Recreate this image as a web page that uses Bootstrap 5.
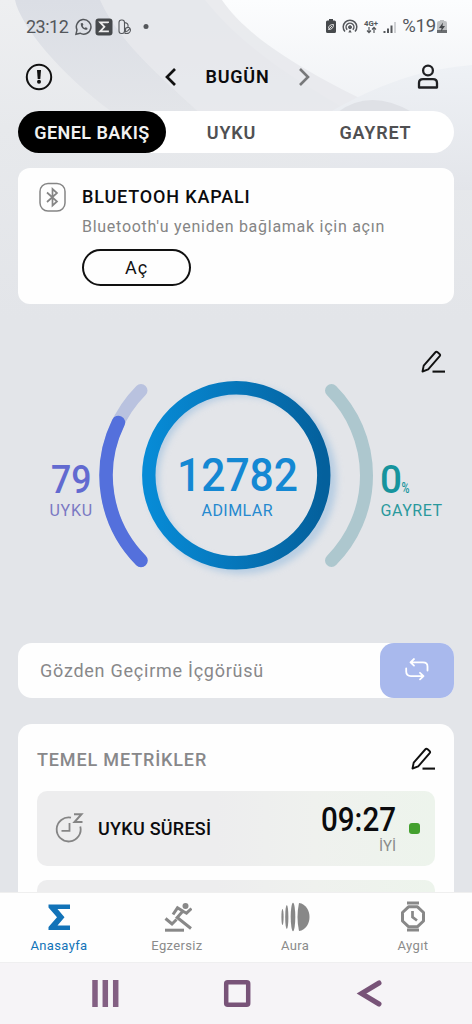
<!DOCTYPE html>
<html lang="tr">
<head>
<meta charset="utf-8">
<meta name="viewport" content="width=device-width, initial-scale=1">
<title>Bugün</title>
<link href="https://cdn.jsdelivr.net/npm/bootstrap@5.3.0/dist/css/bootstrap.min.css" rel="stylesheet">
<style>
  body { font-family: Roboto, "Noto Sans", sans-serif; background: #e3e5e9; color: #0b0b0d; }
  svg { display: block; flex: none; }
  .screen { width: 472px; height: 1024px; }
  .backdrop { inset: 0 0 auto 0; z-index: 0; }
  .statusbar { height: 54px; padding: 0 24px 0 26px; color: #54575b; }
  .statusbar .clock { font-size: 18px; width: 49px; letter-spacing: -.5px; }
  .statusbar .charge { font-size: 18.5px; letter-spacing: -.2px; }
  .topbar { height: 46px; padding: 0 33px 0 25px; }
  .day { font-size: 18px; font-weight: 600; letter-spacing: .75px; }
  .tabs { height: 42px; margin: 11.5px 18px 0; border-radius: 21px; font-size: 18px; font-weight: 600; letter-spacing: .8px; color: #505052; }
  .tabs .tab-on { width: 148px; background: #000; color: #f1f1f1; border-radius: 21px; letter-spacing: .45px; }
  .tabs .tab-mid { width: 131px; }
  .tabs .tab-end { width: 157px; }
  .panel { background: #fefefe; margin: 0 18px; }
  .bt { height: 136.5px; margin-top: 14.5px; border-radius: 12px; padding: 14px 20px; gap: 15px; }
  .bt-title { font-size: 18px; font-weight: 500; line-height: 30px; letter-spacing: .85px; }
  .bt-note { font-size: 16px; line-height: 20px; letter-spacing: .73px; color: #858585; margin-top: 5px; }
  .bt-btn { width: 109px; height: 37px; margin-top: 12px; border: 2px solid #111; border-radius: 19px; font-size: 18px; letter-spacing: .8px; padding: 0; color: #111; }
  .gauges { height: 338.5px; }
  .insight { height: 55.5px; border-radius: 14px; padding-left: 22px; font-size: 18px; letter-spacing: .75px; color: #88888a; }
  .insight .swap { width: 74px; height: 55.5px; border-radius: 14px; background: #a9b9ed; }
  .metrics { height: 168px; margin-top: 26px; border-radius: 14px 14px 0 0; padding: 0 19px; overflow: hidden; }
  .metrics-head { height: 66.5px; padding-top: 4px; font-size: 18px; font-weight: 500; letter-spacing: .85px; color: #88888a; }
  .metric { height: 75.5px; border-radius: 10px; padding: 0 15px 0 18px; background: linear-gradient(90deg, #ededee 45%, #eff1ee 70%, #edf4ec); }
  .metric + .metric { margin-top: 14px; }
  .metric-name { font-size: 18px; font-weight: 500; letter-spacing: .25px; margin-left: 14px; }
  .metric-state { font-size: 15px; line-height: 16px; color: #8a8c8a; }
  .dot-ok { width: 11px; height: 11px; border-radius: 3px; background: #43a02e; margin-left: 13px; }
  .tabbar { height: 70px; background: #fefefe; font-size: 13px; letter-spacing: .35px; color: #8b8b8b; border-top: 1px solid #efefef; padding-top: 7px; }
  .tabbar .on { color: #1273b8; }
  .tabbar .item-label { line-height: 16px; margin-top: 4px; }
  .sysbar { height: 62px; background: #f6f4f7; border-top: 1px solid #efeff0; }
</style>
</head>
<body>
<svg width="0" height="0" class="position-absolute" aria-hidden="true">
  <symbol id="pen" viewBox="0 0 24 24"><path d="M1.5 21.5 2.7 15.6 14.2 2.5Q15.3 1.2 16.6 2.3L18.5 3.9Q19.7 5 18.7 6.2L7.2 19.4ZM1.5 21.5 7.2 19.4" fill="none" stroke="currentColor" stroke-width="1.9" stroke-linejoin="round"/><path d="M11.5 21.6H24" stroke="currentColor" stroke-width="2.1"/></symbol>
</svg>
<div class="screen position-relative overflow-hidden d-flex flex-column">
  <svg class="backdrop position-absolute" width="472" height="320" viewBox="0 0 472 320">
    <defs>
      <linearGradient id="bg1" x1="0" y1="0" x2="0" y2="1"><stop offset="0" stop-color="#eeeff1"/><stop offset=".4" stop-color="#e7e9ec"/><stop offset="1" stop-color="#e3e5e9"/></linearGradient>
      <linearGradient id="bg2" x1="0" y1="0" x2="0" y2="1"><stop offset="0" stop-color="#dbdee5"/><stop offset="1" stop-color="#e3e5e9"/></linearGradient>
      <linearGradient id="bg3" x1="0" y1="0" x2="0" y2="1"><stop offset="0" stop-color="#fcfdfe"/><stop offset="1" stop-color="#eff1f4"/></linearGradient>
      <linearGradient id="bg4" x1="0" y1="0" x2="0" y2="1"><stop offset="0" stop-color="#eef1f5"/><stop offset="1" stop-color="#e3e5ea"/></linearGradient>
    </defs>
    <path d="M0 0H472V320H0Z" fill="url(#bg1)"/>
    <path d="M15 0C20 25 60 74 112 112H350C300 82 245 50 205 0Z" fill="url(#bg2)"/>
    <path d="M100 0H222C247 30 300 70 372 100L390 118H205C170 85 120 45 100 0Z" fill="#e9eaed" opacity=".8"/>
    <path d="M222 0H472V115H395C320 80 250 42 222 0Z" fill="url(#bg3)"/>
    <path d="M330 112C365 92 410 70 472 65V190H330Z" fill="url(#bg4)"/>
    <path d="M338 112Q370 88 412 112Z" fill="#dfe1e6"/>
  </svg>

  <header class="statusbar position-relative d-flex align-items-center">
    <span class="clock">23:12</span>
    <svg width="84" height="20" viewBox="0 0 84 20" fill="none" stroke="#54575b">
      <path d="M1 17.2 2 12.9A7.3 7.3 0 1 1 5 16.2Z" stroke-width="1.5"/>
      <path d="M5.8 6.3C5.5 10.5 8.4 13.1 12.2 12.8L12.5 11 10.6 10.3 9.8 11.1Q8.2 10.4 7.7 8.7L8.4 7.8 7.6 6Z" fill="#54575b" stroke="none"/>
      <rect x="20.5" y="1.5" width="17" height="17" rx="3" fill="#46494c" stroke="none"/>
      <path d="M33 6V5.4H25.2L29.4 9.8 25.2 14.3H33V13.4" stroke="#eee" stroke-width="1.8"/>
      <rect x="44" y="3" width="5.5" height="13.5" rx="2.4" stroke-width="1.1"/>
      <path d="M49.5 5.6Q53.8 5.8 53 10M49.5 16.2Q55 17.5 55.5 13Q55 9 50.6 11.2V15Q52.4 14.8 55.2 11" stroke-width="1.1"/>
      <circle cx="71" cy="9.5" r="2.5" fill="#54575b" stroke="none"/>
    </svg>
    <svg class="ms-auto" width="74" height="20" viewBox="0 0 74 20" fill="none" stroke="#54575b">
      <path d="M3.5 3.5H5V2H9V3.5H10.5Q12 3.5 12 5V14.5Q12 16 10.5 16H3.5Q2 16 2 14.5V5Q2 3.500 3.500 3.500Z" fill="#46494c" stroke="none"/>
      <path d="M4.500 11.500Q4.500 7.500 9.500 7.500Q9.500 12.500 4.500 12.500L8 9" stroke="#eee" stroke-width=".9"/>
      <path d="M21 14.600A6.800 6.800 0 1 1 31 14.600M23.200 12.800A3.900 3.900 0 1 1 28.800 12.800" stroke-width="1.500"/><circle cx="26" cy="10.200" r="1.500" fill="#54575b"/><path d="M24.300 15.500 26 12.500 27.700 15.500Z" fill="#54575b" stroke="none"/>
      <text x="40" y="8.500" font-size="7.500" font-weight="700" fill="#54575b" stroke="none" textLength="14" lengthAdjust="spacingAndGlyphs">4G+</text>
      <path d="M45 10V15.500M43 13.500 45 15.700 47 13.500M50 16V10.500M48 12.500 50 10.300 52 12.500" stroke-width="1.200"/>
      <path d="M60.500 14V16M64 11.500V16M67.500 8.500V16" stroke-width="2"/><path d="M71 5V16" stroke="#cfd1d4" stroke-width="2"/>
    </svg>
    <span class="charge ms-1">%19</span>
    <svg width="12" height="16" viewBox="0 0 12 16"><path d="M4 2V1H8V2H9Q11 2 11 4V11H1V4Q1 2 3 2Z" fill="#bfc1c3"/><path d="M1 11H11V14H1Z" fill="#6b6e71"/><path d="M7 3.500 3 9H5.500L5 12.500 9 7H6.500Z" fill="#44474a"/></svg>
  </header>

  <div class="topbar position-relative d-flex align-items-center">
    <svg width="28" height="28" viewBox="0 0 28 28"><circle cx="14" cy="14" r="12.200" fill="none" stroke="#111" stroke-width="2"/><path d="M12 7H16L15.300 16H12.700Z" fill="#111"/><circle cx="14" cy="18.700" r="2" fill="#111"/></svg>
    <svg style="margin-left:111px" width="14" height="20" viewBox="0 0 14 20"><path d="M11 2 3 10 11 18" fill="none" stroke="#111" stroke-width="2.700"/></svg>
    <span class="day text-center flex-grow-1">BUGÜN</span>
    <svg style="margin-right:106px" width="14" height="20" viewBox="0 0 14 20"><path d="M3 2 11 10 3 18" fill="none" stroke="#77787a" stroke-width="2.600"/></svg>
    <svg width="22" height="26" viewBox="0 0 22 26" fill="none" stroke="#202124" stroke-width="2.300"><circle cx="11" cy="6.500" r="4.900"/><path d="M2 23.500V19Q2 15.200 6 15.200H16Q20 15.200 20 19V23.500Z" stroke-linejoin="round"/></svg>
  </div>

  <nav class="tabs position-relative bg-white d-flex">
    <span class="tab-on d-flex align-items-center justify-content-center">GENEL BAKIŞ</span>
    <span class="tab-mid d-flex align-items-center justify-content-center">UYKU</span>
    <span class="tab-end d-flex align-items-center justify-content-center">GAYRET</span>
  </nav>

  <section class="panel bt position-relative d-flex align-items-start">
    <svg width="29" height="31" viewBox="0 0 29 31" fill="none" stroke="#858585"><rect x="2" y="1.500" width="25" height="27.500" rx="8" stroke-width="1.500"/><path d="M9 10.500 19 19.500 14.500 23.500V7L19 11 9 20" stroke-width="1.700"/></svg>
    <div>
      <div class="bt-title">BLUETOOH KAPALI</div>
      <div class="bt-note">Bluetooth'u yeniden bağlamak için açın</div>
      <button class="bt-btn btn d-flex align-items-center justify-content-center">Aç</button>
    </div>
  </section>

  <section class="gauges position-relative">
    <svg width="472" height="338" viewBox="0 304.500 472 338" fill="none">
      <defs>
        <linearGradient id="ring" x1="0" y1="0" x2="1" y2="0"><stop offset="0" stop-color="#078bd6"/><stop offset=".5" stop-color="#0676ba"/><stop offset="1" stop-color="#04609c"/></linearGradient>
        <linearGradient id="steps" x1="0" y1="0" x2="1" y2="0"><stop offset="0" stop-color="#138bd4"/><stop offset="1" stop-color="#1683cf"/></linearGradient>
        <filter id="soft" x="-20%" y="-20%" width="140%" height="140%"><feGaussianBlur stdDeviation="3.500"/></filter>
      </defs>
      <use href="#pen" x="421" y="350.500" width="24" height="24" color="#111"/>
      <path d="M141 391A120.700 120.700 0 0 0 141 561" stroke="#b9c2df" stroke-width="13" stroke-linecap="round"/>
      <path d="M118.400 423A120.700 120.700 0 0 0 141 561" stroke="#5470dc" stroke-width="13.500" stroke-linecap="round"/>
      <path d="M331.500 391A120.700 120.700 0 0 1 331.500 561" stroke="#adc7ce" stroke-width="13" stroke-linecap="round"/>
      <circle cx="242" cy="480" r="89" stroke="#9dbfdf" stroke-width="11" opacity=".65" filter="url(#soft)"/>
      <circle cx="236.300" cy="475.800" r="87.500" stroke="url(#ring)" stroke-width="13.400"/>
      <g text-anchor="start">
        <text x="177" y="491.500" font-size="47" font-weight="500" fill="#1488d3" textLength="121" lengthAdjust="spacingAndGlyphs">12782</text>
        <text x="201.500" y="516" font-size="16" fill="#2589cf" textLength="71" lengthAdjust="spacing">ADIMLAR</text>
        <text x="51" y="493.500" font-size="39" font-weight="500" fill="#626ad0" textLength="40.500" lengthAdjust="spacingAndGlyphs">79</text>
        <text x="49.500" y="516" font-size="16" fill="#7a79c3" textLength="42.500" lengthAdjust="spacing">UYKU</text>
        <text x="380" y="493.500" font-size="39" font-weight="500" fill="#16949d" textLength="22" lengthAdjust="spacingAndGlyphs">0</text>
        <text x="401.500" y="493" font-size="14" font-weight="500" fill="#16949d" textLength="8" lengthAdjust="spacingAndGlyphs">%</text>
        <text x="380.500" y="516" font-size="16" fill="#2a999d" textLength="61.500" lengthAdjust="spacing">GAYRET</text>
      </g>
    </svg>
  </section>

  <section class="panel insight position-relative d-flex align-items-center justify-content-between">
    <span>Gözden Geçirme İçgörüsü</span>
    <span class="swap d-flex align-items-center justify-content-center">
      <svg width="26" height="26" viewBox="0 0 26 26" fill="none" stroke="#fff" stroke-width="1.800" stroke-linecap="round" stroke-linejoin="round"><path d="M10 2 6.500 5.300 10 8.600M6.500 5.300H19Q23.500 5.300 23.500 9.500V13.500M16 15.800 19.500 19.100 16 22.400M19.500 19.100H7Q2.200 19.100 2.200 14.500V11.500"/></svg>
    </span>
  </section>

  <section class="panel metrics position-relative">
    <div class="metrics-head d-flex align-items-center justify-content-between"><span>TEMEL METRİKLER</span>
      <svg width="24" height="24" color="#111"><use href="#pen"/></svg></div>
    <div class="metric d-flex align-items-center">
      <svg width="29" height="32" viewBox="0 0 29 32" fill="none" stroke="#858585" stroke-width="1.800"><path d="M16 5.700A12 12 0 1 0 25.300 14.500M14.500 11V18.800H6.500"/><path d="M19 2.200H26.500L19.500 10H27.500" stroke-width="2"/></svg>
      <span class="metric-name">UYKU SÜRESİ</span>
      <div class="ms-auto text-end d-flex flex-column align-items-end">
        <svg width="75" height="36" viewBox="0 0 75 36"><text x="0" y="29" font-size="32.500" font-weight="500" fill="#0b0b0d" textLength="75" lengthAdjust="spacingAndGlyphs">09:27</text></svg>
        <span class="metric-state">İYİ</span>
      </div>
      <span class="dot-ok"></span>
    </div>
    <div class="metric"></div>
  </section>

  <nav class="tabbar position-relative d-flex text-center">
    <div class="col-3 on d-flex flex-column align-items-center">
      <svg width="30" height="34" viewBox="0 0 30 34"><path d="M4.500 4.500H26V9H13.500L20.500 17.200 13.500 25.500H26V30H4.500V27L13 17.200 4.500 7.500Z" fill="#1273b8"/></svg>
      <span class="item-label">Anasayfa</span></div>
    <div class="col-3 d-flex flex-column align-items-center">
      <svg width="30" height="34" viewBox="0 0 30 34" fill="none" stroke="#888" stroke-width="3"><circle cx="23.500" cy="6" r="3" fill="#888" stroke="none"/><path d="M11 14.500 15.500 7.800 21.500 11.500 24.500 13.200 29.500 8.500M21 11 15.200 17.500 29 28.500M3.500 18.500 10 24 14.500 19.500"/><path d="M3 30.200H22"/></svg>
      <span class="item-label">Egzersiz</span></div>
    <div class="col-3 d-flex flex-column align-items-center">
      <svg width="30" height="34" viewBox="0 0 30 34" fill="#888"><ellipse cx="2.500" cy="17" rx="1.100" ry="8"/><ellipse cx="6.800" cy="17" rx="1.600" ry="12"/><ellipse cx="13" cy="17" rx="2.300" ry="14.300"/><path d="M19 3C33 5 33 29 19 31Q16 17 19 3Z"/></svg>
      <span class="item-label">Aura</span></div>
    <div class="col-3 d-flex flex-column align-items-center">
      <svg width="30" height="34" viewBox="0 0 30 34" fill="none" stroke="#888"><path d="M9 3H21M9 30H21" stroke-width="3.200"/><path d="M10.500 6.800H19.500L25.500 12.500V21L19.500 26.700H10.500L4.500 21V12.500Z" stroke-width="3" stroke-linejoin="round"/><path d="M14.500 11V17L19 20.500" stroke-width="2.700"/></svg>
      <span class="item-label">Aygıt</span></div>
  </nav>

  <footer class="sysbar position-relative d-flex align-items-center">
    <svg width="472" height="60" viewBox="0 963 472 60" fill="none" stroke="#785378">
      <path d="M95 979V1006M105.300 979V1006M115.700 979V1006" stroke="#835f83" stroke-width="5.500"/>
      <rect x="226.200" y="981.200" width="22" height="22.500" rx="1.500" stroke-width="4.500"/>
      <path d="M379 982 361.500 992.500 379 1003" stroke-width="5" stroke-linecap="round"/>
    </svg>
  </footer>
</div>
<script src="https://cdn.jsdelivr.net/npm/bootstrap@5.3.0/dist/js/bootstrap.bundle.min.js"></script>
</body>
</html>
